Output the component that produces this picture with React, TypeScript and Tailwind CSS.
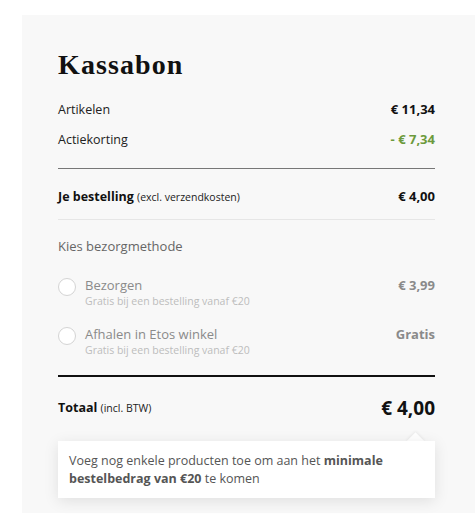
import React from 'react';

const sans = "font-['Open_Sans',sans-serif]";

function Row({ label, value, valueClass }: { label: React.ReactNode; value: string; valueClass: string }) {
  return (
    <div className="flex h-[30px] items-center justify-between">
      <span className="text-[12.5px] text-[#222]">{label}</span>
      <span className={`text-[13px] font-bold ${valueClass}`}>{value}</span>
    </div>
  );
}

function DeliveryOption({ title, price }: { title: string; price: string }) {
  return (
    <div className="flex items-start justify-between">
      <div className="flex items-start gap-[9px]">
        <span className="mt-[2px] h-[18px] w-[18px] rounded-full border border-[#d4d4d4] bg-white" />
        <div className="flex flex-col">
          <span className="text-[13px] leading-[18px] text-[#8a8a8a]">{title}</span>
          <span className="text-[10.5px] leading-[15px] text-[#bdbdbd]">Gratis bij een bestelling vanaf €20</span>
        </div>
      </div>
      <span className="text-[13px] font-bold leading-[18px] text-[#8a8a8a]">{price}</span>
    </div>
  );
}

export default function App() {
  return (
    <div className={`h-[522px] w-[475px] overflow-hidden bg-white pl-[22px] pt-[15px] ${sans}`}>
      <div className="bg-[#f8f8f8] pb-[15px] pl-[36px] pr-[40px] pt-[33px]">
        {/* Title */}
        <h1 className="font-['Liberation_Serif',serif] text-[28px] font-bold leading-[34px] tracking-[1.1px] text-[#111]">
          Kassabon
        </h1>

        <div className="mt-[13px]">
          <Row label="Artikelen" value="€ 11,34" valueClass="text-[#111]" />
          <Row label="Actiekorting" value="- € 7,34" valueClass="text-[#6c9a3c]" />
        </div>

        <div className="mt-[13px] h-px bg-[#777]" />

        <div className="mt-[13px]">
          <Row
            label={
              <>
                <span className="font-bold text-[#111]">Je bestelling</span>{' '}
                <span className="text-[10.5px]">(excl. verzendkosten)</span>
              </>
            }
            value="€ 4,00"
            valueClass="text-[#111]"
          />
        </div>

        <div className="mt-[7px] h-px bg-[#e6e6e6]" />

        <div className="mt-[12px] flex h-[30px] items-center text-[13px] text-[#666]">Kies bezorgmethode</div>

        {/* Delivery options */}
        <div className="mt-[14px] flex flex-col gap-[16px]">
          <DeliveryOption title="Bezorgen" price="€ 3,99" />
          <DeliveryOption title="Afhalen in Etos winkel" price="Gratis" />
        </div>

        <div className="mt-[17px] h-[2px] bg-[#111]" />

        <div className="mt-[16px] flex h-[30px] items-center justify-between">
          <span className="text-[12.5px] text-[#222]">
            <span className="font-bold text-[#111]">Totaal</span> <span className="text-[10.5px]">(incl. BTW)</span>
          </span>
          <span className="text-[19px] font-bold text-[#111]">€ 4,00</span>
        </div>

        {/* Tooltip */}
        <div className="relative mt-[18px]">
          <div className="absolute -top-[6px] right-[13px] h-[13px] w-[13px] rotate-45 bg-white shadow-[-1px_-1px_3px_rgba(0,0,0,0.06)]" />
          <div className="relative bg-white px-[11px] pb-[10px] pt-[11px] text-[12.5px] leading-[18px] text-[#555] shadow-[0_3px_14px_rgba(0,0,0,0.10)]">
            <p>
              Voeg nog enkele producten toe om aan het <b>minimale</b>
            </p>
            <p>
              <b>bestelbedrag van €20</b> te komen
            </p>
          </div>
        </div>
      </div>
    </div>
  );
}
